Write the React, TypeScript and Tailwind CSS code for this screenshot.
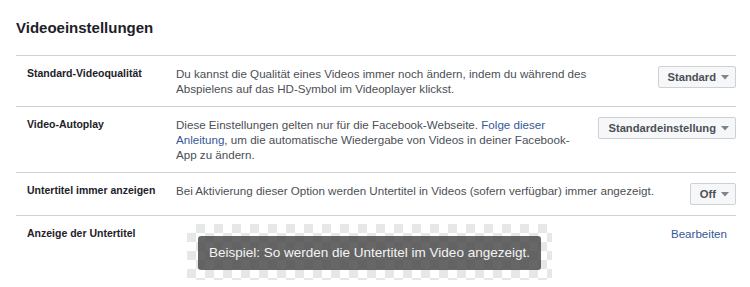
import React from "react";

const Caret: React.FC = () => (
  <svg width="8" height="5" viewBox="0 0 8 5" className="shrink-0">
    <path d="M0 0h8L4 4.5z" fill="#7f838a" />
  </svg>
);

const SelectButton: React.FC<{ label: string }> = ({ label }) => (
  <button className="flex items-center gap-[5px] h-[22px] pl-[9px] pr-[6px] rounded-[2px] border border-[#ced0d4] bg-[#f6f7f9] text-[11.2px] font-bold text-[#4b4f56]">
    {label}
    <Caret />
  </button>
);

const App: React.FC = () => {
  return (
    <div className="w-[750px] h-[287px] bg-white font-['Liberation_Sans',Arial,sans-serif] overflow-hidden">
      <div className="pl-4 pr-[14px] pt-[18px]">
        {/* Header */}
        <h2 className="text-[15px] leading-[20px] font-bold text-[#1d2129] mb-[17px]">
          Videoeinstellungen
        </h2>

        <div className="border-t border-[#cfd1d5]">
          {/* Standard-Videoqualität */}
          <div className="flex items-start py-[10px] pl-[11px] border-b border-[#cfd1d5]">
            <div className="w-[149px] shrink-0 text-[10.5px] leading-[15px] font-bold text-[#1d2129]">
              Standard-Videoqualität
            </div>
            <p className="flex-1 text-[11.6px] leading-[15px] text-[#4b4f56]">
              Du kannst die Qualität eines Videos immer noch ändern, indem du während des
              Abspielens auf das HD-Symbol im Videoplayer klickst.
            </p>
            <div className="ml-4 shrink-0">
              <SelectButton label="Standard" />
            </div>
          </div>

          {/* Video-Autoplay */}
          <div className="flex items-start py-[10px] pl-[11px] border-b border-[#cfd1d5]">
            <div className="w-[149px] shrink-0 text-[10.5px] leading-[15px] font-bold text-[#1d2129]">
              Video-Autoplay
            </div>
            <p className="flex-1 text-[11.6px] leading-[15px] text-[#4b4f56]">
              Diese Einstellungen gelten nur für die Facebook-Webseite.{" "}
              <a className="text-[#365899]">Folge dieser Anleitung</a>, um die automatische
              Wiedergabe von Videos in deiner Facebook-App zu ändern.
            </p>
            <div className="ml-3 shrink-0">
              <SelectButton label="Standardeinstellung" />
            </div>
          </div>

          {/* Untertitel */}
          <div className="flex items-start py-[10px] pl-[11px] border-b border-[#cfd1d5]">
            <div className="w-[149px] shrink-0 text-[10.5px] leading-[15px] font-bold text-[#1d2129]">
              Untertitel immer anzeigen
            </div>
            <p className="flex-1 text-[11.6px] leading-[15px] text-[#4b4f56]">
              Bei Aktivierung dieser Option werden Untertitel in Videos (sofern verfügbar) immer angezeigt.
            </p>
            <div className="ml-3 shrink-0">
              <SelectButton label="Off" />
            </div>
          </div>

          {/* Anzeige der Untertitel */}
          <div className="flex items-start pt-[8px] pl-[11px]">
            <div className="w-[149px] shrink-0 pt-[2px] text-[10.5px] leading-[15px] font-bold text-[#1d2129]">
              Anzeige der Untertitel
            </div>
            <div className="flex-1">
              <div className="ml-[11px] inline-block pt-[12px] pb-[10px] px-[11px] bg-[conic-gradient(#e6e7e9_25%,#fff_0_50%,#e6e7e9_0_75%,#fff_0)] bg-[length:18px_18px]">
                <div className="rounded-[3px] bg-[rgba(70,70,70,0.82)] px-[11px] text-[13.5px] leading-[34px] text-[#f4f4f4] whitespace-nowrap">
                  Beispiel: So werden die Untertitel im Video angezeigt.
                </div>
              </div>
            </div>
            <a className="pt-[2px] pr-[9px] text-[11.6px] leading-[15px] text-[#365899]">
              Bearbeiten
            </a>
          </div>
        </div>
      </div>
    </div>
  );
};

export default App;
